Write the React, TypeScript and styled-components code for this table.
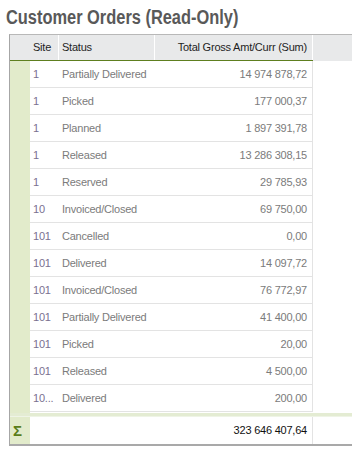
import React from "react";
import styled, { createGlobalStyle } from "styled-components";

const GlobalStyle = createGlobalStyle`
  html, body {
    margin: 0;
    padding: 0;
    background: #ffffff;
  }
  body {
    font-family: "Liberation Sans", Arial, sans-serif;
    overflow: hidden;
  }
  * { box-sizing: border-box; }
`;

const Page = styled.div`
  width: 352px;
  height: 450px;
  padding-top: 7px;
  overflow: hidden;
`;

const TitleBar = styled.div`
  height: 20px;
  margin-bottom: 7px;
  padding-left: 6px;
`;

const Title = styled.h1`
  display: inline-block;
  margin: 0;
  font-family: "Liberation Sans", Arial, sans-serif;
  font-weight: 700;
  font-size: 20px;
  line-height: 20px;
  color: #595959;
  white-space: nowrap;
  transform: scaleX(0.82);
  transform-origin: left center;
`;

const Grid = styled.div`
  margin-left: 9px;
  border-left: 1px solid #a6a6a6;
  border-top: 1px solid #b8b8b8;
  font-size: 11px;
  letter-spacing: -0.22px;
  overflow: hidden;
`;

const HeaderBar = styled.div`
  display: flex;
  height: 26px;
  background: #e8e9ea;
`;

const HeaderCells = styled.div`
  display: flex;
  width: 303px;
  height: 26px;
  border-bottom: 1px solid #5e7f1f;
`;

const Gutter = styled.div`
  flex: 0 0 20px;
  background: #e2ebcb;
`;

const HeaderGutter = styled.div`
  flex: 0 0 20px;
`;

const HeadCell = styled.div<{ $w: number; $right?: boolean }>`
  flex: 0 0 ${(p) => p.$w}px;
  border-right: 1px solid #ffffff;
  padding: ${(p) => (p.$right ? "0 5px 0 3px" : "0 0 0 3px")};
  text-align: ${(p) => (p.$right ? "right" : "left")};
  line-height: 25px;
  color: #1e1e1e;
  white-space: nowrap;
  overflow: hidden;
`;

const Body = styled.div`
  display: flex;
  flex-direction: column;
`;

const Row = styled.div<{ $h?: number }>`
  display: flex;
  height: ${(p) => p.$h ?? 27}px;
`;

const Cells = styled.div`
  display: flex;
  width: 283px;
  border-bottom: 1px solid #e3e3e3;
  border-right: 1px solid #e3e3e3;
  background: #ffffff;
`;

const Cell = styled.div<{ $w?: number; $kind: "site" | "status" | "amount" }>`
  ${(p) => (p.$w ? `flex: 0 0 ${p.$w}px;` : "flex: 1 1 auto;")}
  padding: ${(p) => (p.$kind === "amount" ? "0 5px 0 0" : "0 0 0 3px")};
  text-align: ${(p) => (p.$kind === "amount" ? "right" : "left")};
  line-height: 26px;
  color: ${(p) => (p.$kind === "site" ? "#7a7090" : "#7b7b7b")};
  white-space: nowrap;
`;

const Band = styled.div`
  height: 4px;
  background: #e4ecd3;
  border-bottom: 1px solid #eff4e6;
`;

const Footer = styled.div`
  display: flex;
  height: 29px;
  border-bottom: 2px solid #a9a9a9;
`;

const SumGutter = styled.div`
  flex: 0 0 20px;
  background: #e2ebcb;
  color: #5a7d1a;
  font-weight: 700;
  font-size: 15px;
  line-height: 27px;
  padding-left: 3px;
  letter-spacing: 0;
`;

const SumCells = styled.div`
  width: 283px;
  border-right: 1px solid #e3e3e3;
  text-align: right;
  padding-right: 5px;
  line-height: 27px;
  color: #111111;
`;

type Order = { site: string; status: string; amount: string };

const orders: Order[] = [
  { site: "1", status: "Partially Delivered", amount: "14 974 878,72" },
  { site: "1", status: "Picked", amount: "177 000,37" },
  { site: "1", status: "Planned", amount: "1 897 391,78" },
  { site: "1", status: "Released", amount: "13 286 308,15" },
  { site: "1", status: "Reserved", amount: "29 785,93" },
  { site: "10", status: "Invoiced/Closed", amount: "69 750,00" },
  { site: "101", status: "Cancelled", amount: "0,00" },
  { site: "101", status: "Delivered", amount: "14 097,72" },
  { site: "101", status: "Invoiced/Closed", amount: "76 772,97" },
  { site: "101", status: "Partially Delivered", amount: "41 400,00" },
  { site: "101", status: "Picked", amount: "20,00" },
  { site: "101", status: "Released", amount: "4 500,00" },
  { site: "10...", status: "Delivered", amount: "200,00" },
];

export default function App() {
  return (
    <Page>
      <GlobalStyle />
      <TitleBar>
        <Title>Customer Orders (Read-Only)</Title>
      </TitleBar>
      <Grid>
        <HeaderBar>
          <HeaderCells>
            <HeaderGutter />
            <HeadCell $w={29}>Site</HeadCell>
            <HeadCell $w={96}>Status</HeadCell>
            <HeadCell $w={158} $right>
              Total Gross Amt/Curr (Sum)
            </HeadCell>
          </HeaderCells>
        </HeaderBar>
        <Body>
          {orders.map((o, i) => (
            <Row key={i}>
              <Gutter />
              <Cells>
                <Cell $w={29} $kind="site">
                  {o.site}
                </Cell>
                <Cell $w={96} $kind="status">
                  {o.status}
                </Cell>
                <Cell $kind="amount">{o.amount}</Cell>
              </Cells>
            </Row>
          ))}
          <Row $h={1}>
            <Gutter />
          </Row>
        </Body>
        <Band />
        <Footer>
          <SumGutter>Σ</SumGutter>
          <SumCells>323 646 407,64</SumCells>
        </Footer>
      </Grid>
    </Page>
  );
}
